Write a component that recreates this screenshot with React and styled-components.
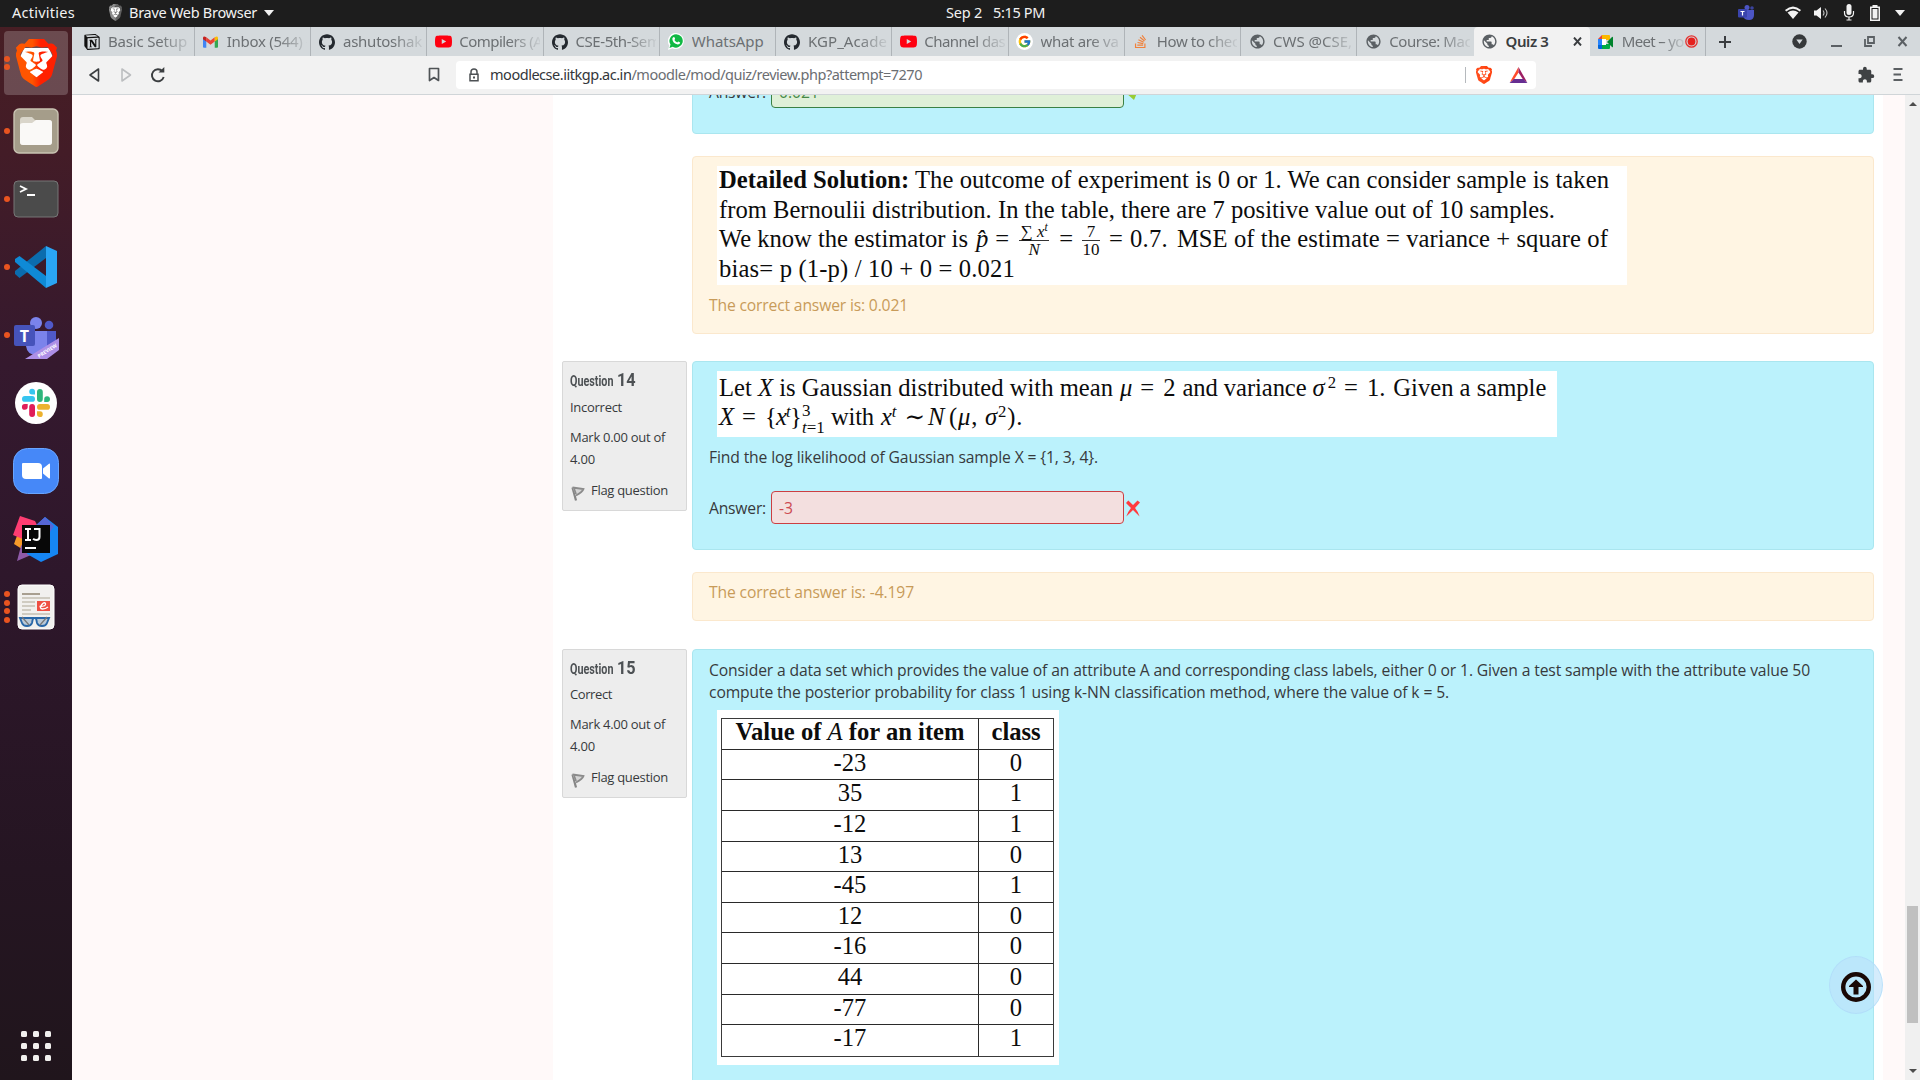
import React, { useLayoutEffect, useRef, useState } from "react";
import styled, { createGlobalStyle, css } from "styled-components";
import { SiBrave, SiNotion, SiGithub, SiYoutube } from "react-icons/si";
import { FcGoogle } from "react-icons/fc";
import { FaStackOverflow } from "react-icons/fa";
import { MdPublic, MdExtension } from "react-icons/md";

const uiFont = '"Noto Sans", "Open Sans", sans-serif';
const bodyFont = '"Open Sans", "Noto Sans", sans-serif';
const paperFont = '"Liberation Serif", "DejaVu Serif", serif';

const GlobalStyle = createGlobalStyle`
  * { box-sizing: border-box; }
  body { margin: 0; overflow: hidden; background: #fff9f9; }
  svg { display: block; flex: none; }
`;

/* ---------- text that spreads its letters over a given width ---------- */

const FitSpan = styled.span`
  display: inline-block;
  white-space: nowrap;
`;

function Fit({ width, children }) {
  const ref = useRef(null);
  const [spacing, setSpacing] = useState(0);
  useLayoutEffect(() => {
    const el = ref.current;
    const count = el.textContent.length;
    let value = 0;
    for (let i = 0; i < 4; i += 1) {
      el.style.letterSpacing = `${value}px`;
      value += (width - el.getBoundingClientRect().width) / count;
    }
    setSpacing(value);
  }, [width]);
  return (
    <FitSpan ref={ref} style={{ letterSpacing: `${spacing}px` }}>
      {children}
    </FitSpan>
  );
}

/* ---------- desktop frame ---------- */

const Desktop = styled.div`
  width: 1920px;
  height: 1080px;
  display: flex;
  flex-direction: column;
  overflow: hidden;
  font-family: ${uiFont};
`;

const TopBar = styled.header`
  height: 27px;
  flex: none;
  display: flex;
  align-items: center;
  background: #1d1d1d;
  color: #f2f2f2;
  font-size: 14.5px;
  line-height: 25px;
  padding: 0 15px 2px 12px;
`;
const TopApp = styled.div`
  display: flex;
  align-items: center;
  gap: 7px;
  margin-left: 34px;
`;
const Caret = styled.i`
  border: 5px solid transparent;
  border-top: 6px solid #f2f2f2;
  border-bottom: 0;
  flex: none;
`;
const Clock = styled.div`
  display: flex;
  gap: 11px;
  margin-left: 672px;
`;
const Tray = styled.div`
  display: flex;
  align-items: center;
  margin-left: auto;
  gap: 12.6px;
`;
const TrayGap = styled.span`
  width: 4px;
`;

const Workspace = styled.div`
  flex: 1;
  min-height: 0;
  display: flex;
`;

/* ---------- launcher ---------- */

const Dock = styled.nav`
  width: 72px;
  flex: none;
  display: flex;
  flex-direction: column;
  padding: 2px 0 19px;
  background: linear-gradient(#471e24 0%, #431c27 12%, #35192e 32%, #2e172b 52%, #251522 80%, #20151c 100%);
`;
const DockItem = styled.div`
  height: 68px;
  display: flex;
  align-items: center;
  position: relative;
`;
const DockTile = styled.div`
  width: 64px;
  height: 64px;
  margin-left: 4px;
  border-radius: 4px;
  display: flex;
  align-items: center;
  justify-content: center;
  background: ${(p) => (p.$active ? "rgba(255,255,255,.2)" : "transparent")};
`;
const Dots = styled.div`
  position: absolute;
  left: 4px;
  top: 0;
  height: 100%;
  display: flex;
  flex-direction: column;
  justify-content: center;
  gap: 2.7px;
`;
const Dot = styled.i`
  width: 6px;
  height: 6px;
  border-radius: 50%;
  background: #e95420;
`;
const AppGrid = styled.div`
  margin: auto 0 0 21px;
  display: grid;
  grid-template-columns: repeat(3, 6px);
  gap: 6px;
`;
const GridDot = styled.i`
  height: 6px;
  border-radius: 1.5px;
  background: #f1f0ee;
`;

/* ---------- browser ---------- */

const Browser = styled.section`
  flex: 1;
  min-width: 0;
  display: flex;
  flex-direction: column;
`;
const TabStrip = styled.div`
  height: 29px;
  flex: none;
  display: flex;
  background: #d4d9dc;
  padding-left: 6.5px;
`;
const Tab = styled.div`
  width: 116.25px;
  flex: none;
  display: flex;
  align-items: center;
  padding: 0 ${(p) => (p.$closable ? 7 : 3)}px 0 8px;
  color: #6c7073;
  font-size: 15px;
  border-right: 1px solid ${(p) => (p.$quiet ? "transparent" : "#afb4b8")};
  &:first-child {
    padding-left: 5.5px;
  }
  ${(p) =>
    p.$active &&
    css`
      background: #f2f2f2;
      color: #3a3d40;
      font-weight: 600;
      border-radius: 4px 4px 0 0;
    `}
`;
const TabIcon = styled.span`
  width: 16px;
  height: 16px;
  display: flex;
  flex: none;
  align-items: center;
  justify-content: center;
`;
const TabText = styled.span`
  flex: 1;
  min-width: 0;
  margin-left: 8px;
  overflow: hidden;
  white-space: nowrap;
  line-height: 26px;
  padding-bottom: 1px;
  ${(p) =>
    p.$fade &&
    css`
      mask-image: linear-gradient(to right, #000 62%, rgba(0, 0, 0, 0.1) 100%);
    `}
`;
const NewTab = styled.div`
  width: 38px;
  display: flex;
  align-items: center;
  justify-content: center;
`;
const WindowControls = styled.div`
  margin-left: auto;
  display: flex;
  align-items: center;
  gap: 22px;
  padding-right: 12px;
`;

const Toolbar = styled.div`
  height: 39px;
  flex: none;
  display: flex;
  align-items: center;
  background: #f2f2f2;
  border-bottom: 1px solid #d0d5d8;
  padding: 0 13px 1px 14px;
`;
const NavButtons = styled.div`
  display: flex;
  gap: 16px;
  align-items: center;
`;
const BookmarkSlot = styled.div`
  margin-left: 262px;
  width: 28px;
`;
const AddressBar = styled.div`
  width: 1080px;
  height: 28px;
  border-radius: 4px;
  background: #fff;
  display: flex;
  align-items: center;
  padding: 0 8.5px 0 11px;
  font-size: 14.5px;
  color: #6b6e72;
`;
const Url = styled.span`
  margin-left: 9px;
  line-height: 26px;
  padding-bottom: 1px;
  b {
    font-weight: 400;
    color: #33363a;
  }
`;
const Divider = styled.i`
  width: 1px;
  height: 16px;
  background: #b5b9bd;
  margin: 0 11px 0 auto;
`;
const ShieldSlot = styled.span`
  margin: 0 17px 0 -1px;
`;
const ToolbarEnd = styled.div`
  margin-left: auto;
  display: flex;
  align-items: center;
  gap: 14px;
`;

/* ---------- page ---------- */

const Viewport = styled.main`
  flex: 1;
  min-height: 0;
  display: flex;
  background: #fff9f9;
  overflow: hidden;
  position: relative;
`;
const Page = styled.div`
  width: 1330px;
  margin-left: 481px;
  background: #fff;
  padding: 0 9px;
  overflow: hidden;
  font-family: ${bodyFont};
  font-size: 15.7px;
  line-height: 22px;
  color: #373a3c;
`;
const Question = styled.article`
  display: grid;
  grid-template-columns: 125px 1182px;
  column-gap: 5px;
  align-items: start;
  margin-top: ${(p) => p.$offset}px;
`;
const Info = styled.aside`
  height: ${(p) => p.$height}px;
  background: #ededed;
  border: 1px solid #d8d8d8;
  border-radius: 2px;
  padding: 7px 7px 0;
  font-size: 13px;
`;
const InfoTitle = styled.h3`
  margin: 0 0 ${(p) => p.$gap}px;
  height: 22px;
  font: 700 14px/22px Roboto, sans-serif;
  color: #4d5154;
  display: flex;
  align-items: baseline;
`;
const Condensed = styled.span`
  display: block;
  width: ${(p) => p.$width}px;
  white-space: nowrap;
  transform: scaleX(${(p) => p.$scale});
  transform-origin: left;
  font-size: ${(p) => p.$size}px;
`;
const InfoLine = styled.div`
  height: 22px;
  white-space: nowrap;
  margin-bottom: ${(p) => p.$after || 0}px;
`;
const FlagLine = styled.div`
  display: flex;
  height: 22px;
  gap: 6px;
  svg {
    margin: 7px 0 0 1px;
    width: 14px;
  }
`;
const Content = styled.div`
  grid-column: 2;
  display: flex;
  flex-direction: column;
  gap: 22px;
`;
const Panel = styled.section`
  height: ${(p) => p.$height}px;
  border: 1px solid;
  border-radius: 4px;
  padding: ${(p) => p.$top ?? 9}px 16px 0;
  ${(p) =>
    p.$outcome
      ? css`
          background: #fff5e3;
          border-color: #fbe8cd;
          color: #c89b59;
        `
      : css`
          background: #bbf2fc;
          border-color: #aae6ef;
        `}
`;
const Paragraph = styled.p`
  margin: ${(p) => p.$top || 0}px 0 ${(p) => p.$bottom || 0}px;
  white-space: nowrap;
`;
const AnswerRow = styled.div`
  display: flex;
  align-items: center;
  height: 33px;
  margin-top: 23px;
  line-height: 24px;
`;
const AnswerField = styled.div`
  width: 353px;
  height: 33px;
  margin: 0 2px 0 5px;
  border: 1px solid;
  border-radius: 4px;
  padding: 0 7px;
  line-height: 32px;
  ${(p) =>
    p.$correct
      ? css`
          background: #dff0d8;
          border-color: #3a8145;
          color: #468847;
        `
      : css`
          background: #f3dfdf;
          border-color: #cb3f42;
          color: #cc4a52;
        `}
`;
const MarkSlot = styled.span`
  padding-top: 2px;
`;

/* ---------- typeset figures ---------- */

const Figure = styled.figure`
  margin: 0 0 0 8px;
  width: ${(p) => p.$width}px;
  height: ${(p) => p.$height}px;
  padding: ${(p) => p.$top || 0}px 0 0 2px;
  background: #fff;
  color: #0c0c0c;
  font-family: ${paperFont};
  font-size: 24.6px;
`;
const Line = styled.div`
  height: 29.6px;
  line-height: 27.6px;
  white-space: nowrap;
  display: flex;
  align-items: flex-start;
`;
const Piece = styled.span`
  margin-left: ${(p) => p.$gap || 0}px;
`;
const Frac = styled.span`
  display: flex;
  flex-direction: column;
  align-items: center;
  margin: -2px 0 0 ${(p) => p.$gap}px;
  font-size: 17px;
  line-height: 17px;
  width: ${(p) => p.$width}px;
`;
const Numerator = styled.span`
  align-self: stretch;
  text-align: center;
  border-bottom: 1.5px solid #333;
  height: 18px;
`;
const Sup = styled.sup`
  font-size: 0.68em;
  line-height: 0;
  vertical-align: 0.5em;
`;
const Scripts = styled.span`
  display: flex;
  flex-direction: column;
  justify-content: space-between;
  margin-left: 1px;
  width: 22px;
  height: 32px;
  font-size: 17px;
  line-height: 15px;
`;
const DataGrid = styled.div`
  width: 333px;
  margin-left: 2px;
  border: 1.5px solid #3a3a3a;
  display: grid;
  grid-template-rows: repeat(11, 30.65px);
`;
const DataRow = styled.div`
  display: grid;
  grid-template-columns: 257px 1fr;
  text-align: center;
  line-height: 26.6px;
  font-weight: ${(p) => (p.$head ? 700 : 400)};
  border-bottom: ${(p) => (p.$last ? 0 : "1.5px solid #2a2a2a")};
  i {
    font-weight: 400;
  }
`;
const Cell = styled.div`
  &:first-child {
    border-right: 1.5px solid #2a2a2a;
  }
`;

/* ---------- scroll furniture ---------- */

const ScrollBar = styled.div`
  width: 15px;
  margin-left: auto;
  background: #f0f0f0;
  display: flex;
  flex-direction: column;
  align-items: center;
  padding: 7px 0;
`;
const ScrollArrow = styled.i`
  border: 4px solid transparent;
  border-${(p) => (p.$up ? "bottom" : "top")}: 4px solid #4d4d4d;
  border-${(p) => (p.$up ? "top" : "bottom")}: 0;
`;
const Thumb = styled.div`
  width: 11px;
  height: 117px;
  margin: auto 0 46px;
  background: #c0c0c0;
`;
const ToTop = styled.div`
  position: absolute;
  right: 37px;
  bottom: 66px;
  width: 54px;
  height: 58px;
  border-radius: 50%;
  background: rgba(188, 224, 250, 0.62);
  border: 1px solid rgba(175, 220, 250, 0.7);
  display: flex;
  align-items: center;
  justify-content: center;
  padding-top: 3px;
`;

/* ---------- icons ---------- */

const BraveLogo = ({ w, h, id, from = "#ff5500", to = "#ff2000" }) => (
  <svg width={w} height={h} viewBox="2 0 20 24" preserveAspectRatio="none">
    <defs>
      <linearGradient id={id}>
        <stop offset=".4" stopColor={from} />
        <stop offset=".6" stopColor={to} />
      </linearGradient>
    </defs>
    <path d="M6 4.500h12l2 4.500-3 8-5 4-5-4-3-8z" fill="#fff" />
    <SiBrave size={24} fill={`url(#${id})`} />
  </svg>
);

const FilesLogo = () => (
  <svg width="46" height="46" viewBox="0 0 46 46">
    <rect x="1" y="1" width="44" height="44" rx="5" fill="#a59d8a" stroke="#c9c3b2" strokeWidth="1.4" />
    <path d="M7 12q0-3 3-3h9l3 3h14q3 0 3 3v19q0 3-3 3H10q-3 0-3-3z" fill="#d9d5ca" />
    <path d="M7 17q0-2 3-2h9l4-3h13q3 0 3 3v19q0 3-3 3H10q-3 0-3-3z" fill="#faf9f7" />
  </svg>
);

const TerminalLogo = () => (
  <svg width="46" height="38" viewBox="0 0 46 38">
    <rect x="1" y="1" width="44" height="36" rx="4" fill="#4b4b4b" stroke="#777" />
    <path d="M7 6l6 3-6 3M14 15h8" stroke="#fff" strokeWidth="1.8" fill="none" />
  </svg>
);

const CodeLogo = () => (
  <svg width="42" height="42" viewBox="0 0 42 42">
    <path d="M31 0v12L4.500 32 0 28v-3z" fill="#0b6cae" />
    <path d="M31 42V30L4.500 10 0 13v3z" fill="#0f8ad6" />
    <path d="M31 0l11 5v32l-11 5z" fill="#2aa5f4" />
  </svg>
);

const TeamsLogo = () => (
  <svg width="46" height="49" viewBox="0 -5 46 49">
    <circle cx="36" cy="9" r="4.300" fill="#5059c9" />
    <path d="M28 15h15v12q0 9-9 9h-6z" fill="#5059c9" />
    <circle cx="23" cy="7" r="6" fill="#7b83eb" />
    <path d="M13 15h21v15q0 9-10 9t-11-9z" fill="#7b83eb" />
    <rect x="1" y="9" width="21" height="21" rx="2" fill="#4653ba" />
    <text x="11.500" y="25.500" textAnchor="middle" fontFamily="Open Sans, sans-serif" fontWeight="700" fontSize="16" fill="#fff">T</text>
    <path d="M46 22v12L34 43H12z" fill="#ad8fe6" />
    <text transform="translate(26 42) rotate(-32)" fontFamily="Open Sans, sans-serif" fontWeight="700" fontSize="5" fill="#fff">PREVIEW</text>
  </svg>
);

const SlackLogo = () => (
  <svg width="42" height="42" viewBox="0 0 42 42">
    <circle cx="21" cy="21" r="21" fill="#fff" />
    <g fill="#36c5f0">
      <rect x="7" y="14" width="13" height="5.800" rx="2.900" />
      <path d="M20 12.500h-3a2.900 2.900 0 1 1 3-3z" />
    </g>
    <g fill="#2eb67d">
      <rect x="22" y="7" width="5.800" height="13" rx="2.900" />
      <path d="M29.200 20v-3a2.900 2.900 0 1 1 3 3z" />
    </g>
    <g fill="#ecb22e">
      <rect x="22" y="22" width="13" height="5.800" rx="2.900" />
      <path d="M22 29.200h3a2.900 2.900 0 1 1-3 3z" />
    </g>
    <g fill="#e01e5a">
      <rect x="14.200" y="22" width="5.800" height="13" rx="2.900" />
      <path d="M12.700 22v3a2.900 2.900 0 1 1-3-3z" />
    </g>
  </svg>
);

const ZoomLogo = () => (
  <svg width="46" height="46" viewBox="0 0 46 46">
    <rect x=".5" y=".5" width="45" height="45" rx="14" fill="#4688f8" stroke="#69a5ff" />
    <path d="M9 16q0-1 1-1h15q4 0 4 4v11q0 1-1 1H13q-4 0-4-4z" fill="#fff" />
    <path d="M30 20.500l6-4.800q1-.7 1 .6v13.500q0 1.200-1 .6l-6-4.900z" fill="#fff" />
  </svg>
);

const IdeaLogo = () => (
  <svg width="46" height="46" viewBox="0 0 46 46">
    <path d="M1 28l4-11 10 10-6 6z" fill="#f89a2a" />
    <path d="M7 0l15 5 6 12L12 24 0 19z" fill="#fe3d72" />
    <path d="M8 30l-4 15 14-6 12-26-14 6z" fill="#8f5aa8" />
    <path d="M20 12L32 1l13 10v27l-17 8-14-8z" fill="#1686f3" />
    <path d="M20 12L32 1l9 9-8 12z" fill="#5566d6" />
    <rect x="9" y="9" width="28" height="28" fill="#080808" />
    <path d="M12 13h6M15 13v11M12 24h6M21 13h5.500v8q0 3-3.200 3-2 0-3.200-1.200M12 32h11" stroke="#fff" strokeWidth="2" fill="none" />
  </svg>
);

const ReaderLogo = () => (
  <svg width="38" height="46" viewBox="0 0 38 46">
    <rect x="1" y="1" width="36" height="44" rx="4" fill="#f1f0ee" stroke="#fff" />
    <path d="M5 10h18" stroke="#a89f90" strokeWidth="2" />
    <path d="M5 14h28M5 18h13M5 22h13M5 26h9M5 30h28" stroke="#c4bfb2" strokeWidth="1.700" />
    <rect x="20" y="17" width="13" height="10" fill="#ee4f43" />
    <path d="M22.500 22.500q7 0 6-3-1.500-2-4 1.500t1 4q3 0 5.500-2" stroke="#fff" fill="none" strokeWidth="1.300" />
    <g fill="#b9c9d8" stroke="#2867a8" strokeWidth="1.900">
      <path d="M3 34h13l-1 5q-1 3-5 3t-5-3z" />
      <path d="M19 34h13l-2 5q-1 3-5 3t-5-3z" />
      <path d="M15 35q2.500-2 5 0" fill="none" />
    </g>
    <path d="M5 33l7 8M30 33l-7 8" stroke="#777" strokeWidth="1.200" />
  </svg>
);

const GmailMark = () => (
  <svg width="15" height="12" viewBox="0 0 16 12">
    <path d="M0 2l3.500 2.500V12H1q-1 0-1-1z" fill="#4285f4" />
    <path d="M12.500 4.500L16 2v9q0 1-1 1h-2.500z" fill="#34a853" />
    <path d="M3.500 1L8 4.500 12.500 1v4.500L8 9 3.500 5.500z" fill="#ea4335" />
    <path d="M0 1.500Q.5-1 3.500 1v4.500L0 3z" fill="#c5221f" />
    <path d="M16 1.500Q15.500-1 12.500 1v4.500L16 3z" fill="#fbbc04" />
  </svg>
);

const WhatsAppMark = () => (
  <svg width="16" height="17" viewBox="0 0 16 17">
    <path d="M8 0a8 8 0 1 1-3.600 15.200L0 17l1.300-4.500A8 8 0 0 1 8 0z" fill="#fff" />
    <path d="M8.100 1.200a6.700 6.700 0 1 1-3.400 12.500L1.500 15l1-3.500A6.700 6.700 0 0 1 8.100 1.200z" fill="#10b944" />
    <path d="M5.300 4.200q1-.6 1.400.6l.4 1q0 .5-.7 1.100 1 1.900 2.900 2.600l.9-1.100 2 1q-.2 2-2.400 2-5-1-5.500-5.500 0-1 1-1.700z" fill="#fff" />
  </svg>
);

const MeetMark = () => (
  <svg width="15" height="14" viewBox="0 0 15 14">
    <path d="M4 0h7q1 0 1 1v4H8V4H4z" fill="#fbb900" />
    <path d="M0 4l4-4v4z" fill="#ea4335" />
    <path d="M0 4h4v6H0z" fill="#2684fc" />
    <path d="M0 10h4v4H1q-1 0-1-1z" fill="#0066da" />
    <path d="M4 10h4V9h4v4q0 1-1 1H4z" fill="#00ac47" />
    <path d="M9 7l5-5q1-.6 1 .4v9.200q0 1-1 .4z" fill="#00832d" />
    <path d="M4 4h4v6H4z" fill="#fff" />
  </svg>
);

const GoogleMark = () => (
  <svg width="17" height="17" viewBox="0 0 17 17">
    <circle cx="8.500" cy="8.500" r="8.500" fill="#fff" />
    <FcGoogle x="1.500" y="1.500" size={14} />
  </svg>
);

const FlagMark = () => (
  <svg width="14" height="15" viewBox="0 0 14 15">
    <path d="M1.500 1.500l3.500 13" stroke="#858585" strokeWidth="2.200" />
    <path d="M1.500 1.500l11 1.500q-1 3-7.500 6.500M3 2.500l2 5.500" fill="#d5d5d5" stroke="#8b8b8b" strokeWidth="1.800" />
  </svg>
);

const CrossMark = () => (
  <svg width="14" height="17" viewBox="0 0 14 17">
    <path d="M2.300.5L7 5 11.500.5 14 2.500 9 8q3 3.500 4.600 8.500Q10 13 7 10 4 13 .3 16.500 2 11.500 5 8L0 3z" fill="#ff3b3f" />
  </svg>
);

const TickMark = () => (
  <svg width="15" height="16" viewBox="0 0 15 16">
    <path d="M0 9l4 1 8-9 2 1-6 14z" fill="#99cc33" />
  </svg>
);

const tabs = [
  { icon: <SiNotion size={16} color="#111" />, text: "Basic Setup", w: 79, fade: true },
  { icon: <GmailMark />, text: "Inbox (544) -", w: 84, fade: true },
  { icon: <SiGithub size={16} color="#24292f" />, text: "ashutoshak", w: 79, fade: true },
  { icon: <SiYoutube size={17} color="#ff0010" />, text: "Compilers (A", w: 83, fade: true },
  { icon: <SiGithub size={16} color="#24292f" />, text: "CSE-5th-Sem", w: 85, fade: true },
  { icon: <WhatsAppMark />, text: "WhatsApp", w: 72 },
  { icon: <SiGithub size={16} color="#24292f" />, text: "KGP_Acade", w: 79, fade: true },
  { icon: <SiYoutube size={17} color="#ff0010" />, text: "Channel das", w: 81, fade: true },
  { icon: <GoogleMark />, text: "what are va", w: 78, fade: true },
  { icon: <FaStackOverflow size={15} color="#f0813a" />, text: "How to chec", w: 82, fade: true },
  { icon: <MdPublic size={17} color="#5b6064" />, text: "CWS @CSE,", w: 79, fade: true },
  { icon: <MdPublic size={17} color="#5b6064" />, text: "Course: Mac", w: 82, fade: true, quiet: true },
  { icon: <MdPublic size={17} color="#5b6064" />, text: "Quiz 3", w: 43, active: true, quiet: true },
  { icon: <MeetMark />, text: "Meet – yo", w: 62, fade: true, recording: true },
];

const dock = [
  { icon: <BraveLogo w={41} h={48} id="braveDock" />, dots: 2, active: true },
  { icon: <FilesLogo />, dots: 1 },
  { icon: <TerminalLogo />, dots: 1 },
  { icon: <CodeLogo />, dots: 1 },
  { icon: <TeamsLogo />, dots: 1 },
  { icon: <SlackLogo />, dots: 0 },
  { icon: <ZoomLogo />, dots: 0 },
  { icon: <IdeaLogo />, dots: 0 },
  { icon: <ReaderLogo />, dots: 4 },
];

const rows = [["-23", 0], ["35", 1], ["-12", 1], ["13", 0], ["-45", 1], ["12", 0], ["-16", 0], ["44", 0], ["-77", 0], ["-17", 1]];

function QuestionInfo({ number, state, stateWidth, mark, height, gap }) {
  return (
    <Info $height={height}>
      <InfoTitle $gap={gap}>
        <Condensed $size={14} $scale={0.77} $width={46.500}>Question</Condensed>
        <Condensed $size={18.500} $scale={0.88} $width={18}>{number}</Condensed>
      </InfoTitle>
      <InfoLine $after={8}><Fit width={stateWidth}>{state}</Fit></InfoLine>
      <InfoLine><Fit width={95}>Mark {mark} out of</Fit></InfoLine>
      <InfoLine $after={8.500}><Fit width={25}>4.00</Fit></InfoLine>
      <FlagLine>
        <FlagMark />
        <Fit width={77}>Flag question</Fit>
      </FlagLine>
    </Info>
  );
}

export default function App() {
  return (
    <Desktop>
      <GlobalStyle />
      <TopBar>
        <Fit width={63}>Activities</Fit>
        <TopApp>
          <BraveLogo w={13} h={17} id="braveTop" from="#8d8d8d" to="#5f5f5f" />
          <Fit width={128}>Brave Web Browser</Fit>
          <Caret />
        </TopApp>
        <Clock>
          <Fit width={36}>Sep 2</Fit>
          <Fit width={52}>5:15 PM</Fit>
        </Clock>
        <Tray>
          <svg width="17" height="16" viewBox="0 0 17 16">
            <circle cx="9" cy="2.500" r="2.500" fill="#4c55c4" />
            <circle cx="14" cy="3" r="1.800" fill="#3b449f" />
            <path d="M5 5h11v5q0 5-5 5t-6-4z" fill="#4c55c4" />
            <rect x="0" y="4" width="9" height="8.500" rx="1" fill="#3a44ac" />
            <path d="M2.500 6.500h4M4.500 6.500v4" stroke="#fff" strokeWidth="1.200" />
          </svg>
          <TrayGap />
          <svg width="16" height="14" viewBox="0 0 16 14">
            <path d="M0 4q8-7 16 0l-1.200 1.500Q8 0 1.200 5.500z" fill="#f2f2f2" />
            <path d="M2.500 6.500Q8 2.500 13.500 6.500L8 13z" fill="#f2f2f2" />
          </svg>
          <svg width="16" height="14" viewBox="0 0 16 14">
            <path d="M1 4.500h2.500L8 1v12L3.500 9.500H1z" fill="#f2f2f2" />
            <path d="M10 4.500q2 2.500 0 5M12 2.500q4 4.500 0 9" stroke="#c6c6c6" fill="none" strokeWidth="1.100" />
          </svg>
          <svg width="14" height="17" viewBox="0 0 14 17">
            <rect x="4.500" y="0" width="5" height="11" rx="2.500" fill="#f2f2f2" />
            <path d="M2.500 7v2q0 4 4.500 4t4.500-4V7M7 13v3M4.500 16h5" stroke="#f2f2f2" fill="none" strokeWidth="1.200" />
          </svg>
          <svg width="14" height="16" viewBox="0 0 14 16">
            <path d="M4.500 0h5v1.500h2.500V16H2V1.500h2.500z" fill="#f2f2f2" />
            <path d="M3.500 3h7v11.500h-7z" fill="#1d1d1d" />
            <path d="M4.500 4h5v9.500h-5z" fill="#f2f2f2" />
          </svg>
          <Caret />
        </Tray>
      </TopBar>

      <Workspace>
        <Dock>
          {dock.map((item, i) => (
            <DockItem key={i}>
              <Dots>{Array.from({ length: item.dots }, (_, d) => <Dot key={d} />)}</Dots>
              <DockTile $active={item.active}>{item.icon}</DockTile>
            </DockItem>
          ))}
          <AppGrid>{Array.from({ length: 9 }, (_, d) => <GridDot key={d} />)}</AppGrid>
        </Dock>

        <Browser>
          <TabStrip>
            {tabs.map((tab, i) => (
              <Tab key={i} $active={tab.active} $quiet={tab.quiet} $closable={tab.active || tab.recording}>
                <TabIcon>{tab.icon}</TabIcon>
                <TabText $fade={tab.fade}><Fit width={tab.w}>{tab.text}</Fit></TabText>
                {tab.active && (
                  <svg width="9" height="9" viewBox="0 0 9 9"><path d="M1 .5l7 8M8 .5l-7 8" stroke="#3a3d40" strokeWidth="1.900" /></svg>
                )}
                {tab.recording && (
                  <svg width="13" height="13" viewBox="0 0 13 13">
                    <circle cx="6.500" cy="6.500" r="5.700" fill="none" stroke="#e5302d" strokeWidth="1.300" />
                    <circle cx="6.500" cy="6.500" r="3.900" fill="#e5201d" />
                  </svg>
                )}
              </Tab>
            ))}
            <NewTab>
              <svg width="12" height="12" viewBox="0 0 12 12"><path d="M6 0v12M0 6h12" stroke="#3a3d40" strokeWidth="2" /></svg>
            </NewTab>
            <WindowControls>
              <svg width="17" height="15" viewBox="0 0 17 15">
                <circle cx="7.500" cy="7.500" r="7.200" fill="#36393b" />
                <path d="M4.300 5.500h6.400l-3.200 4.500z" fill="#d4d9dc" />
              </svg>
              <svg width="11" height="12" viewBox="0 0 11 12"><path d="M0 10h11" stroke="#5b6064" strokeWidth="2" /></svg>
              <svg width="11" height="11" viewBox="0 0 11 11">
                <path d="M4 1h6v6H4zM1 3v7h7" fill="none" stroke="#5b6064" strokeWidth="1.800" />
              </svg>
              <svg width="11" height="11" viewBox="0 0 11 11"><path d="M1.500 1l8 9M9.500 1l-8 9" stroke="#5b6064" strokeWidth="2" /></svg>
            </WindowControls>
          </TabStrip>

          <Toolbar>
            <NavButtons>
              <svg width="16" height="16" viewBox="0 0 16 16"><path d="M12.500 2v12L4 8z" fill="none" stroke="#3b3e40" strokeWidth="1.600" strokeLinejoin="round" /></svg>
              <svg width="16" height="16" viewBox="0 0 16 16"><path d="M4 2v12l8.500-6z" fill="none" stroke="#bcbec0" strokeWidth="1.600" strokeLinejoin="round" /></svg>
              <svg width="16" height="16" viewBox="0 0 16 16">
                <path d="M12.500 4.300A6 6 0 1 0 13.700 10" fill="none" stroke="#3b3e40" strokeWidth="1.900" />
                <path d="M8.500 5.500h5.800V0z" fill="#3b3e40" />
              </svg>
            </NavButtons>
            <BookmarkSlot>
              <svg width="12" height="15" viewBox="0 0 12 15">
                <path d="M1.500 1.500h9v12L6 10.500l-4.500 3z" fill="none" stroke="#4f5356" strokeWidth="1.700" strokeLinejoin="round" />
              </svg>
            </BookmarkSlot>
            <AddressBar>
              <svg width="14" height="14" viewBox="0 0 14 14">
                <path d="M4 6V3.800Q4 1 7 1t3 2.800V6M3 6.200h8v6.500H3z" fill="none" stroke="#4d5154" strokeWidth="1.500" />
                <path d="M6 8.500h2v2H6z" fill="#4d5154" />
              </svg>
              <Url><Fit width={432}><b>moodlecse.iitkgp.ac.in</b>/moodle/mod/quiz/review.php?attempt=7270</Fit></Url>
              <Divider />
              <ShieldSlot><BraveLogo w={16} h={18} id="braveBar" from="#ff4d1c" to="#ff4310" /></ShieldSlot>
              <svg width="19" height="16" viewBox="0 0 19 16">
                <path d="M9.500 0L1 15l4-2.500 4.500-7z" fill="#ff4b2b" />
                <path d="M9.500 0L18 15l-4-2.500-4.500-7z" fill="#9e1f63" />
                <path d="M.5 16h18L14.300 12H5z" fill="#662d91" />
              </svg>
            </AddressBar>
            <ToolbarEnd>
              <MdExtension size={18} color="#3f4244" />
              <svg width="18" height="13" viewBox="0 0 18 13"><path d="M4.500 1h9M4.500 6.500h7.500M4.500 12h9" stroke="#5b5f62" strokeWidth="1.800" /></svg>
            </ToolbarEnd>
          </Toolbar>

          <Viewport>
            <Page>
              <Question $offset={-53}>
                <Content>
                  <Panel $height={92}>
                    <AnswerRow>
                      <Fit width={57}>Answer:</Fit>
                      <AnswerField $correct>0.021</AnswerField>
                      <TickMark />
                    </AnswerRow>
                  </Panel>
                  <Panel $outcome $height={178}>
                    <Figure $width={910} $height={119}>
                      <Line><Fit width={890}><b>Detailed Solution:</b> The outcome of experiment is 0 or 1. We can consider sample is taken</Fit></Line>
                      <Line><Fit width={836}>from Bernoulii distribution. In the table, there are 7 positive value out of 10 samples.</Fit></Line>
                      <Line>
                        <Fit width={249}>We know the estimator is</Fit>
                        <Piece $gap={8}><i>p̂</i></Piece>
                        <Piece $gap={7}>=</Piece>
                        <Frac $gap={10} $width={30}>
                          <Numerator>∑ <i>x</i><Sup><i>t</i></Sup></Numerator>
                          <i>N</i>
                        </Frac>
                        <Piece $gap={10}>=</Piece>
                        <Frac $gap={9} $width={18}>
                          <Numerator>7</Numerator>
                          <span>10</span>
                        </Frac>
                        <Piece $gap={9}>=</Piece>
                        <Piece $gap={7}><Fit width={38}>0.7.</Fit></Piece>
                        <Piece $gap={9}><Fit width={431}>MSE of the estimate = variance + square of</Fit></Piece>
                      </Line>
                      <Line><Fit width={296}>bias= p (1-p) / 10 + 0 = 0.021</Fit></Line>
                    </Figure>
                    <Paragraph $top={9}><Fit width={199}>The correct answer is: 0.021</Fit></Paragraph>
                  </Panel>
                </Content>
              </Question>

              <Question $offset={27}>
                <QuestionInfo number="14" state="Incorrect" stateWidth={52} mark="0.00" height={150} gap={5} />
                <Content>
                  <Panel $height={189}>
                    <Figure $width={840} $height={66} $top={2.600}>
                      <Line>
                        <Fit width={394}>Let <i>X</i> is Gaussian distributed with mean</Fit>
                        <Piece $gap={7}><i>μ</i></Piece>
                        <Piece $gap={8}>=</Piece>
                        <Piece $gap={9}>2</Piece>
                        <Piece $gap={7}><Fit width={124}>and variance</Fit></Piece>
                        <Piece $gap={6}><i>σ</i></Piece>
                        <Piece $gap={3}><Sup>2</Sup></Piece>
                        <Piece $gap={8}>=</Piece>
                        <Piece $gap={9}>1.</Piece>
                        <Piece $gap={8}><Fit width={153}>Given a sample</Fit></Piece>
                      </Line>
                      <Line>
                        <i>X</i>
                        <Piece $gap={8}>=</Piece>
                        <Piece $gap={9}><Fit width={36}>{"{"}<i>x</i><Sup><i>t</i></Sup>{"}"}</Fit></Piece>
                        <Scripts><span>3</span><span><i>t</i>=1</span></Scripts>
                        <Piece $gap={7}><Fit width={43}>with</Fit></Piece>
                        <Piece $gap={7}><i>x</i><Sup><i>t</i></Sup></Piece>
                        <Piece $gap={8}>∼</Piece>
                        <Piece $gap={3}><Fit width={21}><i>N</i></Fit></Piece>
                        <Piece><Fit width={74}>(<i>μ</i>, <i>σ</i><Sup>2</Sup>).</Fit></Piece>
                      </Line>
                    </Figure>
                    <Paragraph $top={9}><Fit width={389}>Find the log likelihood of Gaussian sample X = {"{1, 3, 4}"}.</Fit></Paragraph>
                    <AnswerRow>
                      <Fit width={57}>Answer:</Fit>
                      <AnswerField>-3</AnswerField>
                      <MarkSlot><CrossMark /></MarkSlot>
                    </AnswerRow>
                  </Panel>
                  <Panel $outcome $height={49} $top={8}>
                    <Paragraph><Fit width={205}>The correct answer is: -4.197</Fit></Paragraph>
                  </Panel>
                </Content>
              </Question>

              <Question $offset={28}>
                <QuestionInfo number="15" state="Correct" stateWidth={42} mark="4.00" height={149} gap={4} />
                <Content>
                  <Panel $height={520}>
                    <Paragraph $bottom={7}>
                      <Fit width={1101}>Consider a data set which provides the value of an attribute A and corresponding class labels, either 0 or 1. Given a test sample with the attribute value 50</Fit>
                      <br />
                      <Fit width={740}>compute the posterior probability for class 1 using k-NN classification method, where the value of k = 5.</Fit>
                    </Paragraph>
                    <Figure $width={342} $height={355} $top={8}>
                      <DataGrid>
                        <DataRow $head>
                          <Cell><Fit width={229}>Value of <i>A</i> for an item</Fit></Cell>
                          <Cell><Fit width={49}>class</Fit></Cell>
                        </DataRow>
                        {rows.map(([value, label], i) => (
                          <DataRow key={i} $last={i === rows.length - 1}>
                            <Cell>{value}</Cell>
                            <Cell>{label}</Cell>
                          </DataRow>
                        ))}
                      </DataGrid>
                    </Figure>
                  </Panel>
                </Content>
              </Question>
            </Page>
            <ScrollBar>
              <ScrollArrow $up />
              <Thumb />
              <ScrollArrow />
            </ScrollBar>
            <ToTop>
              <svg width="30" height="30" viewBox="0 0 30 30">
                <circle cx="15" cy="15" r="12.800" fill="none" stroke="#190805" strokeWidth="4.400" />
                <path d="M15 7.500l7 6.500v1h-4.500v7.500h-5V15H8v-1z" fill="#190805" />
              </svg>
            </ToTop>
          </Viewport>
        </Browser>
      </Workspace>
    </Desktop>
  );
}
